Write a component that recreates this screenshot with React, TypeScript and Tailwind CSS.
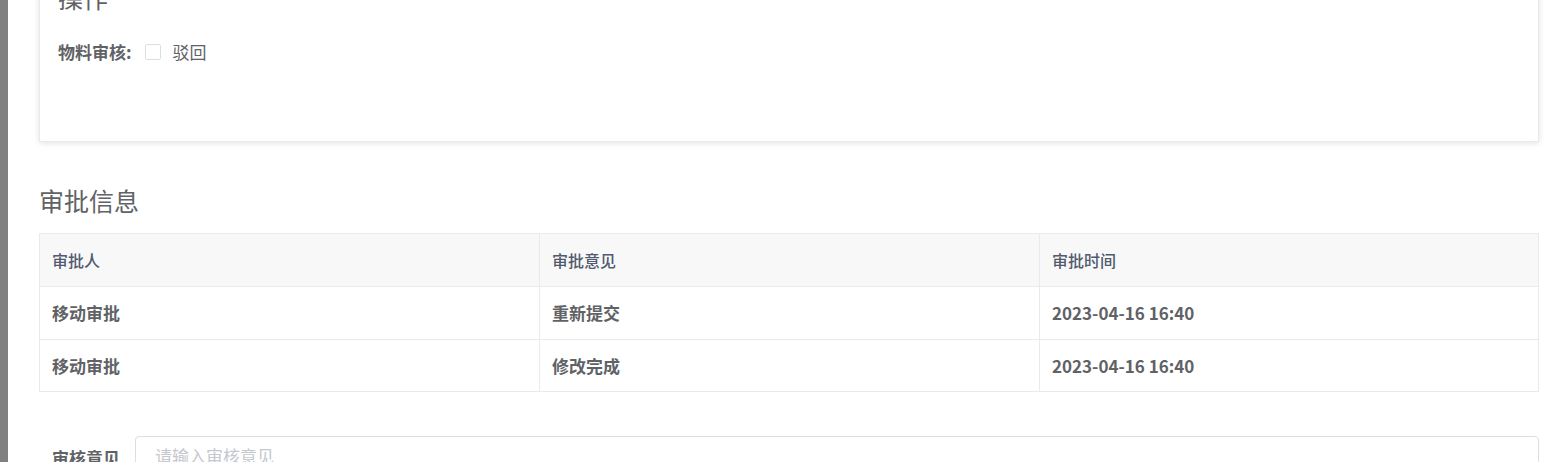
import React from "react";

const rows = [
  { name: "移动审批", opinion: "重新提交", time: "2023-04-16 16:40" },
  { name: "移动审批", opinion: "修改完成", time: "2023-04-16 16:40" },
];

const font = { fontFamily: '"Noto Sans CJK SC", "Noto Sans", sans-serif' };

export default function App() {
  return (
    <div className="flex h-[462px] overflow-hidden bg-white" style={font}>
      {/* left gray strip */}
      <div className="w-[8px] shrink-0 bg-[#808080]" />

      <div className="flex-1 pl-[31px] pr-[12px]">
        {/* operations card */}
        <div className="mt-[-40px] bg-white border border-[#e8eaec] shadow-[0_1px_6px_rgba(0,0,0,0.12)] pt-[20px] pb-[73px] px-[18px]">
          <div className="text-[25px] leading-[32px] text-[#606266]">操作</div>
          <div className="mt-[23px] flex items-center h-[32px]">
            <span className="text-[17px] font-bold text-[#606266]">物料审核:</span>
            <label className="ml-[13px] flex items-center">
              <span className="w-[16px] h-[16px] rounded-[2px] border border-[#dcdee2] bg-white" />
              <span className="ml-[12px] text-[17px] text-[#606266]">驳回</span>
            </label>
          </div>
        </div>

        {/* approval info */}
        <div className="mt-[42px] text-[25px] leading-[32px] text-[#606266]">审批信息</div>

        <div className="mt-[17px] border border-[#e8eaec]">
          <div className="grid grid-cols-[500px_500px_1fr] h-[53px] bg-[#f8f8f9] border-b border-[#e8eaec]">
            {["审批人", "审批意见", "审批时间"].map((h, i) => (
              <div
                key={h}
                className={`flex items-center px-[12px] text-[16px] font-medium text-[#515a6e] ${i < 2 ? "border-r border-[#e8eaec]" : ""}`}
              >
                {h}
              </div>
            ))}
          </div>
          {rows.map((r, idx) => (
            <div
              key={idx}
              className={
                idx < rows.length - 1
                  ? "grid grid-cols-[500px_500px_1fr] h-[53px] border-b border-[#e8eaec]"
                  : "grid grid-cols-[500px_500px_1fr] h-[51px]"
              }
            >
              <div className="flex items-center px-[12px] text-[17px] font-bold text-[#606266] border-r border-[#e8eaec]">
                {r.name}
              </div>
              <div className="flex items-center px-[12px] text-[17px] font-bold text-[#606266] border-r border-[#e8eaec]">
                {r.opinion}
              </div>
              <div className="flex items-center px-[12px] text-[17px] font-bold text-[#606266]">
                {r.time}
              </div>
            </div>
          ))}
        </div>

        {/* review opinion */}
        <div className="mt-[44px] flex">
          <div className="w-[96px] shrink-0 pr-[15px] pt-[9px] text-right text-[17px] font-bold text-[#606266]">
            审核意见
          </div>
          <textarea
            className="flex-1 h-[80px] resize-none rounded-[4px] border border-[#dcdee2] px-[19px] py-[7px] text-[17px] leading-[24px] text-[#606266] placeholder:text-[#c5c8ce] outline-none"
            placeholder="请输入审核意见"
          />
        </div>
      </div>
    </div>
  );
}
